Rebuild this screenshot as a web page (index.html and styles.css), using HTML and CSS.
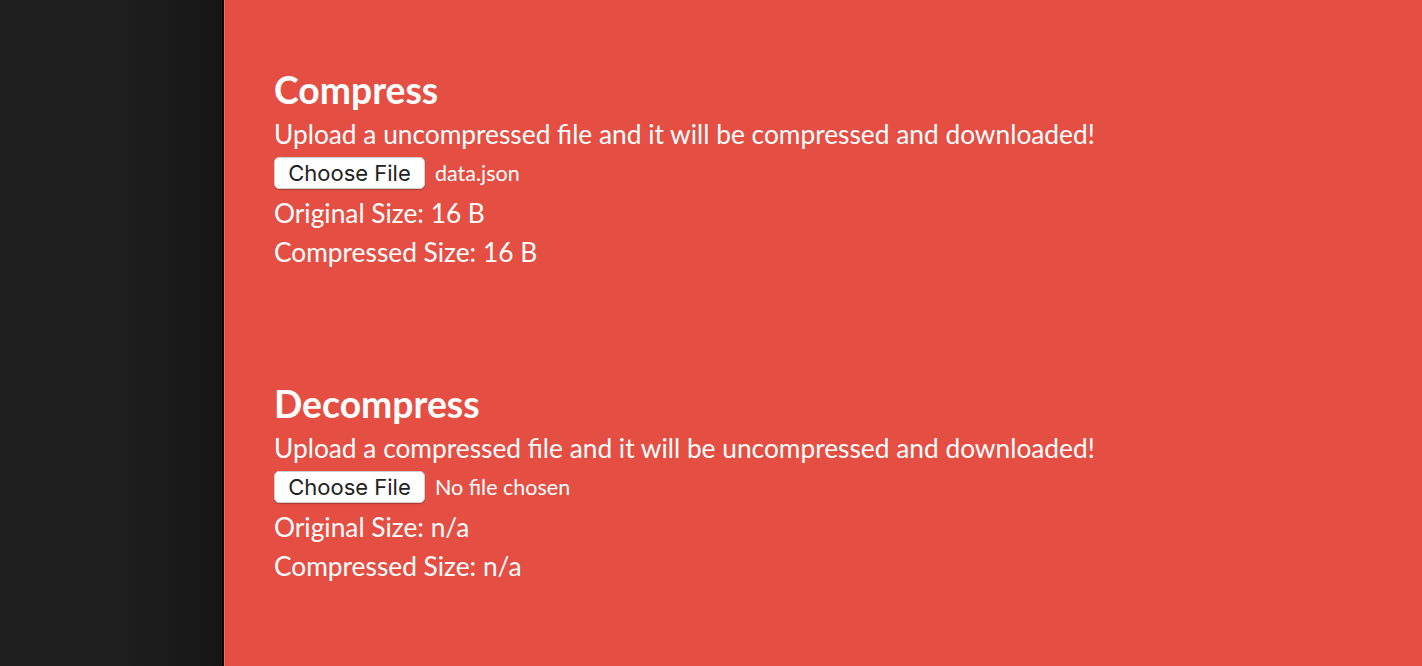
FILE: index.html
```html
<!DOCTYPE html>
<html>
<head>
<meta charset="utf-8">
<link rel="stylesheet" href="styles.css">
</head>
<body>
<div class="app">
  <aside class="sidebar"></aside>
  <main class="main">
    <section class="panel">
      <h2 class="title">Compress</h2>
      <p class="line">Upload a uncompressed file and it will be compressed and downloaded!</p>
      <div class="file-row">
        <button class="file-btn" type="button">Choose File</button>
        <span class="file-name">data.json</span>
      </div>
      <p class="line">Original Size: 16 B</p>
      <p class="line">Compressed Size: 16 B</p>
    </section>
    <section class="panel">
      <h2 class="title">Decompress</h2>
      <p class="line">Upload a compressed file and it will be uncompressed and downloaded!</p>
      <div class="file-row">
        <button class="file-btn" type="button">Choose File</button>
        <span class="file-name">No file chosen</span>
      </div>
      <p class="line">Original Size: n/a</p>
      <p class="line">Compressed Size: n/a</p>
    </section>
  </main>
</div>
</body>
</html>
```
FILE: styles.css
```css
html, body {
  margin: 0;
  padding: 0;
  height: 100%;
}
body {
  font-family: Lato, "Liberation Sans", sans-serif;
  color: #fff;
  background: #e54f43;
  overflow: hidden;
}
.app {
  display: flex;
  height: 666px;
}
.sidebar {
  width: 222px;
  flex: none;
  background: linear-gradient(to right, #1e1e1e 0%, #1e1e1e 55%, #161616 100%);
  border-right: 2px solid #000;
}
.main {
  flex: 1;
  background: #e54f43;
  border-left: 1px solid #ef6d62;
  padding: 65px 0 0 49px;
}
.panel {
  margin-bottom: 107px;
}
.title {
  font-size: 37.3px;
  font-weight: 700;
  margin: 0;
  line-height: 50px;
}
.line {
  font-size: 26.3px;
  margin: 0;
  line-height: 39px;
}
.file-row {
  display: flex;
  align-items: center;
  height: 43px;
  margin-top: -3px;
}
.file-btn {
  width: 151px;
  height: 32px;
  background: #fff;
  border: 1px solid #d0cfcf;
  border-radius: 5px;
  box-shadow: 0 1px 1px rgba(0,0,0,0.25);
  font-family: Inter, "Liberation Sans", sans-serif;
  font-size: 22px;
  color: #222;
  padding: 0;
  margin-right: 10px;
}
.file-name {
  font-size: 21.5px;
}
```
